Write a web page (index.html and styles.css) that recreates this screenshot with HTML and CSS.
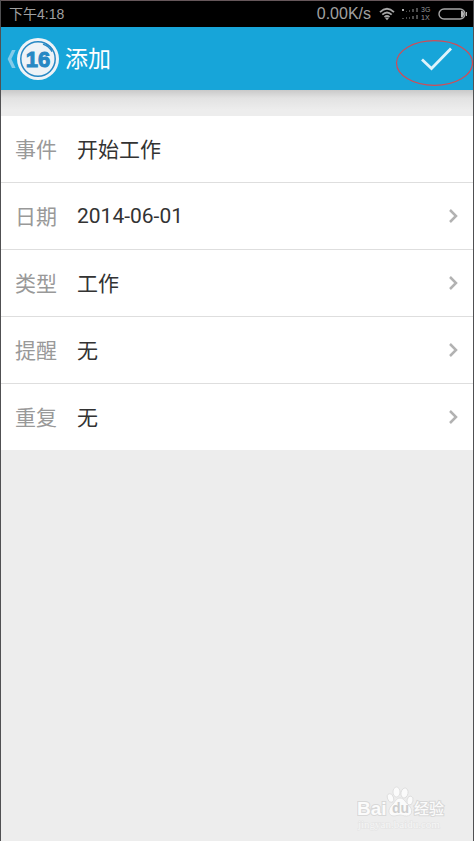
FILE: index.html
```html
<!DOCTYPE html>
<html lang="zh-CN">
<head>
<meta charset="utf-8">
<meta name="viewport" content="width=device-width, initial-scale=1">
<title>添加</title>
<link rel="stylesheet" href="styles.css">
</head>
<body>
<div class="screen">
  <div class="status">
    <span class="clock">下午4:18</span>
    <span class="speed">0.00K/s</span>
    <svg class="wifi" width="16" height="14" viewBox="0 0 16 14" fill="none" stroke="#a6a6a6" stroke-width="1.8">
      <path d="M1 5.2Q8-1.6 15 5.2M3.3 7.7Q8 3.2 12.7 7.7M5.5 10.2Q8 7.8 10.5 10.2"/>
      <path d="M6.2 11.2Q8 9.6 9.800 11.2L8 13.2Z" fill="#a6a6a6" stroke="none"/>
    </svg>
    <svg class="signal" width="17" height="12" viewBox="0 0 17 12">
      <path fill="#aaa" d="M0 1h2v2H0z"/>
      <path fill="#4c4c4c" d="M4 3h1v1H4zM7 2h1v2H7zM10 1h2v3h-2zM14 0h2v4h-2zM0 10h2v1H0zM4 9h1v2H4zM7 9h1v2H7zM10 8h2v3h-2zM14 7h2v4h-2z"/>
    </svg>
    <span class="network"><span>3G</span><span>1X</span></span>
    <svg class="battery" width="30" height="12" viewBox="0 0 30 12">
      <rect x="1" y="1" width="26" height="10" rx="5" fill="none" stroke="#a6a6a6" stroke-width="1.4"/>
      <path fill="#b5b5b5" d="M23 2.4Q26 3 26 6T23 9.6zM28 4h1v4h-1z"/>
    </svg>
  </div>
  <header class="bar">
    <button class="back" type="button" aria-label="返回">
      <svg width="9" height="20" viewBox="0 0 9 20"><path d="M5 1H8.600L4.400 10L8.600 19H5L.6 10Z" fill="#82cbe9"/></svg>
      <svg width="42" height="42" viewBox="0 0 42 42">
        <circle cx="21" cy="21" r="21" fill="#eef3f7"/>
        <circle cx="21" cy="21" r="17.200" fill="none" stroke="#2788c4" stroke-width="1.500"/>
        <path d="M26 6.200Q32 8.300 35 13.800M29 5.800Q33 8 35.500 11.800" fill="none" stroke="#2788c4" stroke-width="1.300"/>
        <text class="logo-text" x="21" y="29" text-anchor="middle">16</text>
      </svg>
    </button>
    <h1 class="title">添加</h1>
    <button class="done" type="submit" form="event-form" aria-label="完成">
      <svg width="78" height="46" viewBox="0 0 78 46" fill="none">
        <ellipse cx="39.500" cy="23" rx="38" ry="22.300" stroke="#d34b55" stroke-width="1.200"/>
        <path d="M27 19.500L36.500 28.500L56 8.500" stroke="#dff3fb" stroke-width="2.800"/>
      </svg>
    </button>
  </header>
  <form class="list" id="event-form">
    <div class="row">
      <label class="name" for="event">事件</label>
      <input class="value" id="event" type="text" value="开始工作">
    </div>
    <button class="row" type="button">
      <span class="name">日期</span><span class="value date">2014-06-01</span>
      <svg class="chevron" width="10" height="16" viewBox="0 0 10 16"><path d="M2 2L8 8L2 14"/></svg>
    </button>
    <button class="row" type="button">
      <span class="name">类型</span><span class="value">工作</span>
      <svg class="chevron" width="10" height="16" viewBox="0 0 10 16"><path d="M2 2L8 8L2 14"/></svg>
    </button>
    <button class="row" type="button">
      <span class="name">提醒</span><span class="value">无</span>
      <svg class="chevron" width="10" height="16" viewBox="0 0 10 16"><path d="M2 2L8 8L2 14"/></svg>
    </button>
    <button class="row" type="button">
      <span class="name">重复</span><span class="value">无</span>
      <svg class="chevron" width="10" height="16" viewBox="0 0 10 16"><path d="M2 2L8 8L2 14"/></svg>
    </button>
  </form>
  <footer class="mark">
    <svg width="92" height="46" viewBox="0 0 92 46">
      <g fill="#fbfbfb" stroke="#dadada" stroke-width=".8">
        <ellipse cx="39.500" cy="7" rx="3.500" ry="5"/>
        <ellipse cx="47.500" cy="8" rx="3.500" ry="5" transform="rotate(12 47.500 8)"/>
        <ellipse cx="33.500" cy="13" rx="3" ry="4.500" transform="rotate(-18 33.500 13)"/>
        <ellipse cx="53" cy="15.500" rx="3" ry="4.500" transform="rotate(12 53 15.500)"/>
        <path d="M43 13C47 13 48.500 17.500 52 20.500C56 24.500 55.500 31 49.500 31C46 31 45 30 43 30S39 31 37 31C31 31 30.500 24.500 34.500 20.500C38 17.500 39 13 43 13Z"/>
      </g>
      <g class="mark-text">
        <text class="brand" x="0" y="30">Bai</text>
        <text class="brand-du" x="35" y="28">du</text>
        <text class="brand-cn" x="57" y="29">经验</text>
        <text class="site" x="1" y="43">jingyan.baidu.com</text>
      </g>
    </svg>
  </footer>
</div>
</body>
</html>
```
FILE: styles.css
```css
* {
  box-sizing: border-box;
}

body {
  margin: 0;
  background: #ededed;
  font-family: "Liberation Sans", "Noto Sans CJK SC", sans-serif;
}

button,
input {
  margin: 0;
  padding: 0;
  border: 0;
  background: none;
  font: inherit;
  color: inherit;
}

svg {
  display: block;
  flex: none;
}

.screen {
  display: flex;
  flex-direction: column;
  min-height: 100vh;
  border: solid #505052;
  border-width: 0 1px;
}

.status {
  display: flex;
  align-items: center;
  height: 27px;
  padding: 0 7px 0 8px;
  border-top: 1px solid #66575a;
  background: #000;
  color: #a0a0a0;
  font-size: 16px;
}

.clock {
  flex: 1;
  padding-bottom: 2px;
  font-size: 14px;
}

.speed {
  margin-right: 8px;
}

.wifi {
  margin-right: 7px;
}

.signal {
  margin-right: 2px;
}

.network {
  display: flex;
  flex-direction: column;
  width: 11px;
  margin-right: 6px;
  color: #999;
  font-size: 7px;
  line-height: 8px;
}

.battery {
  margin-right: -2px;
}

.bar {
  display: flex;
  align-items: center;
  height: 63px;
  background: #17a5d9;
  color: #fff;
}

.back {
  display: flex;
  align-items: center;
  gap: 1px;
  padding-left: 6px;
}

.logo-text {
  fill: #2788c4;
  stroke: #2788c4;
  stroke-width: 1px;
  font: bold 22px "Liberation Sans", sans-serif;
}

.title {
  flex: 1;
  margin: 0 0 0 6px;
  padding-bottom: 3px;
  font: 400 23px "Noto Sans CJK SC", sans-serif;
}

.done {
  margin-top: 8px;
}

.list {
  padding-top: 26px;
  background: linear-gradient(#c9c9c9, #e2e2e2 8px, #ededed 20px);
}

.row {
  display: flex;
  align-items: center;
  width: 100%;
  height: 67px;
  padding: 0 15px 0 14px;
  border-bottom: 1px solid #dedede;
  background: #fff;
  text-align: left;
  font: 400 21px "Noto Sans CJK SC", sans-serif;
}

.row:last-child {
  height: 66px;
  border-bottom-color: #fff;
}

.name,
.value {
  padding-bottom: 2px;
}

.name {
  width: 62px;
  color: #999;
}

.value {
  flex: 1;
  min-width: 0;
  color: #333;
}

.date {
  padding-bottom: 0;
  font-family: Roboto, sans-serif;
}

.chevron {
  fill: none;
  stroke: #b2b2b2;
  stroke-width: 2.5px;
}

.mark {
  display: flex;
  justify-content: flex-end;
  margin-top: auto;
  padding: 0 24px 10px 0;
}

.mark-text {
  fill: #fbfbfb;
  stroke: #d8d8d8;
  stroke-width: 2px;
  paint-order: stroke;
  font-family: "Liberation Sans", "Noto Sans CJK SC", sans-serif;
}

.brand {
  font-size: 19px;
  font-weight: 700;
}

.brand-du {
  fill: #cecece;
  stroke: none;
  font-size: 14px;
  font-weight: 700;
}

.brand-cn {
  font-size: 15px;
  font-weight: 500;
}

.site {
  fill: #f6f6f6;
  stroke: #e3e3e3;
  stroke-width: 1px;
  font-family: "Liberation Serif", serif;
  font-size: 11px;
}
```
